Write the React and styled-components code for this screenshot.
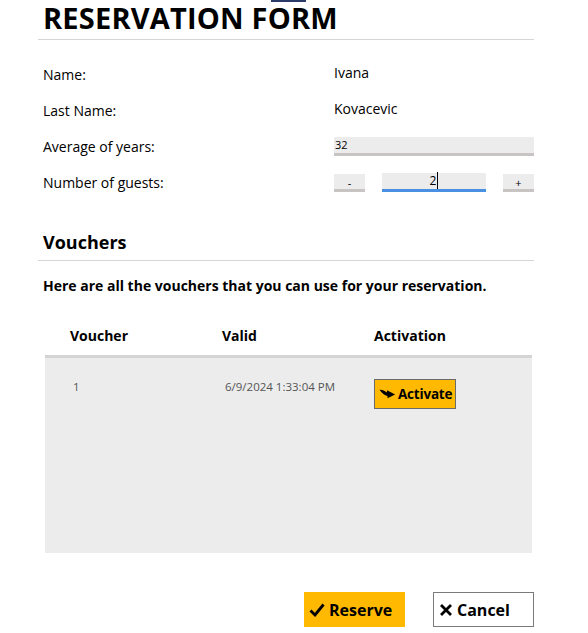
import React from 'react'
import styled, { createGlobalStyle } from 'styled-components'

const GlobalStyle = createGlobalStyle`
  body {
    margin: 0;
    background: #fff;
    font-family: 'Open Sans', 'Noto Sans', sans-serif;
    color: #000;
  }
`

const Page = styled.div`
  position: relative;
  width: 496px;
  margin-left: 38px;
  padding-bottom: 6px;
`

// scrolled-off element peeking in at the top
const TopMark = styled.div`
  position: absolute;
  top: 0;
  left: 233px;
  width: 35px;
  height: 2px;
  background: #2b3a67;
`

const Title = styled.h1`
  margin: 0;
  padding: 1px 0 0 5px;
  font-size: 29px;
  line-height: 34px;
  font-weight: 700;
  letter-spacing: 0.2px;
`

const Divider = styled.div`
  height: 1px;
  background: #d6d6d6;
  margin-top: ${(p) => p.top || 0}px;
`

const FormGrid = styled.div`
  display: grid;
  grid-template-columns: 291px 200px;
  grid-auto-rows: 36px;
  align-items: center;
  padding-left: 5px;
  margin-top: 16px;
  font-size: 14px;
`

const Label = styled.div`
  font-size: 14px;
`

const Value = styled.div`
  font-size: 14px;
  margin-top: -4px;
`

const TextInput = styled.div`
  height: 16px;
  background: #ececec;
  border-bottom: 3px solid #c8c4c4;
  font-size: 11px;
  line-height: 16px;
  padding-left: 1px;
`

const Stepper = styled.div`
  display: grid;
  grid-template-columns: 31px 104px 31px;
  justify-content: space-between;
  align-items: end;
`

const StepButton = styled.div`
  height: 15px;
  background: #ececec;
  border-bottom: 3px solid #c8c4c4;
  font-size: 11px;
  line-height: 18px;
  text-align: center;
`

const StepInput = styled.div`
  height: 16px;
  background: #ececec;
  border-bottom: 3px solid #4a90e2;
  font-size: 12px;
  line-height: 16px;
  text-align: center;
  span {
    border-right: 1px solid #000;
    padding-right: 1px;
  }
`

const SectionTitle = styled.h2`
  margin: 30px 0 0;
  padding-left: 5px;
  font-size: 18px;
  line-height: 24px;
  font-weight: 700;
`

const Intro = styled.p`
  margin: 15px 0 0;
  padding-left: 5px;
  font-size: 14px;
  font-weight: 700;
`

const Table = styled.div`
  margin: 21px 2px 0 7px;
`

const Row = styled.div`
  display: grid;
  grid-template-columns: 152px 152px 1fr;
  padding-left: 25px;
`

const HeadRow = styled(Row)`
  height: 39px;
  align-items: center;
  font-size: 14px;
  font-weight: 700;
  border-bottom: 3px solid #d4d4d4;
`

const TableBody = styled.div`
  height: 195px;
  background: #ececec;
`

const Cell = styled.div`
  padding-top: ${(p) => p.top || 0}px;
  padding-left: ${(p) => p.indent || 0}px;
  font-size: 11.5px;
  color: #555;
`

const ActivateButton = styled.button`
  display: flex;
  align-items: center;
  gap: 2px;
  height: 30px;
  padding: 0 3px 0 4px;
  background: #ffb900;
  border: 1px solid #6b6b6b;
  font-family: inherit;
  font-size: 13.5px;
  font-weight: 700;
  letter-spacing: -0.2px;
  color: #000;
`

const Footer = styled.div`
  display: flex;
  justify-content: flex-end;
  gap: 28px;
  margin-top: 39px;
`

const FooterButton = styled.button`
  display: flex;
  align-items: center;
  gap: 4px;
  width: 101px;
  height: 35px;
  padding: 0 0 0 5px;
  background: ${(p) => (p.primary ? '#ffb900' : '#fff')};
  border: ${(p) => (p.primary ? 'none' : '1px solid #7a7a7a')};
  font-family: inherit;
  font-size: 16px;
  font-weight: 700;
  color: #000;
`

const ArrowIcon = () => (
  <svg width="17" height="12" viewBox="0 0 18 12">
    <path d="M0.5 1.5 C3 1 6 2.5 8.5 4.5 L8.5 2 L17 6.5 L9 10.5 L9 8 C6 7.5 3 5 0.5 1.5 Z" fill="#000" />
  </svg>
)

const CheckIcon = () => (
  <svg width="16" height="14" viewBox="0 0 16 14">
    <path d="M1.5 7.5 L6 12 L14.5 1.5" fill="none" stroke="#000" strokeWidth="2.8" />
  </svg>
)

const CrossIcon = () => (
  <svg width="14" height="14" viewBox="0 0 14 14">
    <path d="M2 2 L12 12 M12 2 L2 12" fill="none" stroke="#000" strokeWidth="2.8" />
  </svg>
)

export default function App() {
  return (
    <Page>
      <GlobalStyle />
      <TopMark />
      <Title>RESERVATION FORM</Title>
      <Divider top={4} />
      <FormGrid>
        <Label>Name:</Label>
        <Value>Ivana</Value>
        <Label>Last Name:</Label>
        <Value>Kovacevic</Value>
        <Label>Average of years:</Label>
        <TextInput>32</TextInput>
        <Label>Number of guests:</Label>
        <Stepper>
          <StepButton>-</StepButton>
          <StepInput><span>2</span></StepInput>
          <StepButton>+</StepButton>
        </Stepper>
      </FormGrid>
      <SectionTitle>Vouchers</SectionTitle>
      <Divider top={6} />
      <Intro>Here are all the vouchers that you can use for your reservation.</Intro>
      <Table>
        <HeadRow>
          <div>Voucher</div>
          <div>Valid</div>
          <div>Activation</div>
        </HeadRow>
        <TableBody>
          <Row>
            <Cell top={21} indent={3}>1</Cell>
            <Cell top={21} indent={3}>6/9/2024 1:33:04 PM</Cell>
            <Cell top={21}>
              <ActivateButton><ArrowIcon />Activate</ActivateButton>
            </Cell>
          </Row>
        </TableBody>
      </Table>
      <Footer>
        <FooterButton primary><CheckIcon />Reserve</FooterButton>
        <FooterButton><CrossIcon />Cancel</FooterButton>
      </Footer>
    </Page>
  )
}
